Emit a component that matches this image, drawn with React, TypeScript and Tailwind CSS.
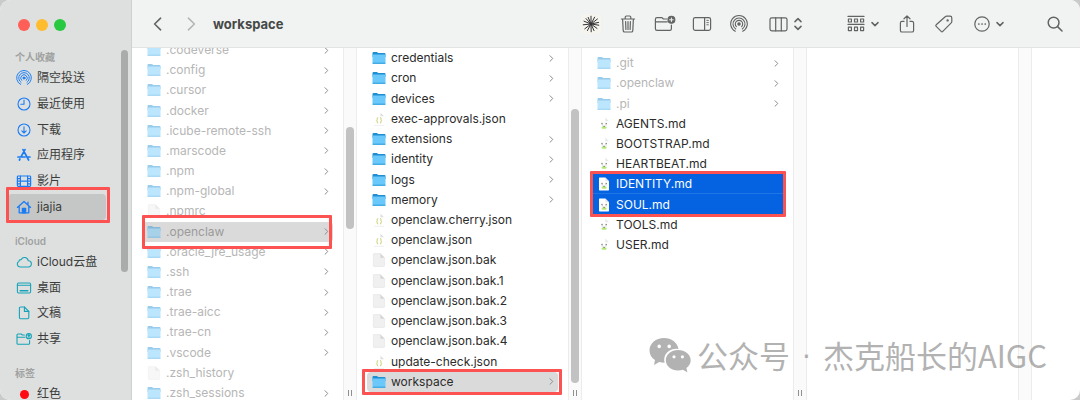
import type { ReactNode } from 'react'
import clsx from 'clsx'

type Kind = 'folder' | 'file' | 'json' | 'md'

type Entry = {
  name: string
  kind: Kind
  dim?: boolean
  state?: 'open' | 'selected'
  mark?: string
}

const homeEntries: Entry[] = [
  { name: '.codeverse', kind: 'folder', dim: true },
  { name: '.config', kind: 'folder', dim: true },
  { name: '.cursor', kind: 'folder', dim: true },
  { name: '.docker', kind: 'folder', dim: true },
  { name: '.icube-remote-ssh', kind: 'folder', dim: true },
  { name: '.marscode', kind: 'folder', dim: true },
  { name: '.npm', kind: 'folder', dim: true },
  { name: '.npm-global', kind: 'folder', dim: true },
  { name: '.npmrc', kind: 'file', dim: true },
  {
    name: '.openclaw',
    kind: 'folder',
    dim: true,
    state: 'open',
    mark: '-top-[7px] -bottom-[7px] left-0 right-[1px]',
  },
  { name: '.oracle_jre_usage', kind: 'folder', dim: true },
  { name: '.ssh', kind: 'folder', dim: true },
  { name: '.trae', kind: 'folder', dim: true },
  { name: '.trae-aicc', kind: 'folder', dim: true },
  { name: '.trae-cn', kind: 'folder', dim: true },
  { name: '.vscode', kind: 'folder', dim: true },
  { name: '.zsh_history', kind: 'file', dim: true },
  { name: '.zsh_sessions', kind: 'folder', dim: true },
]

const openclawEntries: Entry[] = [
  { name: 'credentials', kind: 'folder' },
  { name: 'cron', kind: 'folder' },
  { name: 'devices', kind: 'folder' },
  { name: 'exec-approvals.json', kind: 'json' },
  { name: 'extensions', kind: 'folder' },
  { name: 'identity', kind: 'folder' },
  { name: 'logs', kind: 'folder' },
  { name: 'memory', kind: 'folder' },
  { name: 'openclaw.cherry.json', kind: 'json' },
  { name: 'openclaw.json', kind: 'json' },
  { name: 'openclaw.json.bak', kind: 'file' },
  { name: 'openclaw.json.bak.1', kind: 'file' },
  { name: 'openclaw.json.bak.2', kind: 'file' },
  { name: 'openclaw.json.bak.3', kind: 'file' },
  { name: 'openclaw.json.bak.4', kind: 'file' },
  { name: 'update-check.json', kind: 'json' },
  {
    name: 'workspace',
    kind: 'folder',
    state: 'open',
    mark: '-top-[3px] -bottom-[3px] -left-[5px] -right-[4px]',
  },
]

const workspaceEntries: Entry[] = [
  { name: '.git', kind: 'folder', dim: true },
  { name: '.openclaw', kind: 'folder', dim: true },
  { name: '.pi', kind: 'folder', dim: true },
  { name: 'AGENTS.md', kind: 'md' },
  { name: 'BOOTSTRAP.md', kind: 'md' },
  { name: 'HEARTBEAT.md', kind: 'md' },
  {
    name: 'IDENTITY.md',
    kind: 'md',
    state: 'selected',
    mark: '-top-[3px] -bottom-[23px] -left-[2px] -right-[3px]',
  },
  { name: 'SOUL.md', kind: 'md', state: 'selected' },
  { name: 'TOOLS.md', kind: 'md' },
  { name: 'USER.md', kind: 'md' },
]

function Stroke({
  size,
  box,
  width = 1.3,
  children,
}: {
  size: string
  box: string
  width?: number
  children: ReactNode
}) {
  return (
    <svg
      viewBox={box}
      className={clsx('shrink-0', size)}
      fill="none"
      stroke="currentColor"
      strokeWidth={width}
      strokeLinecap="round"
      strokeLinejoin="round"
      aria-hidden="true"
    >
      {children}
    </svg>
  )
}

function AirdropArcs() {
  return (
    <>
      <path d="M5.3 16.3A8.3 8.3 0 1 1 12.7 16.3" />
      <path d="M5.7 14A6 6 0 1 1 12.3 14" />
      <path d="M6.4 11.7A3.7 3.7 0 1 1 11.6 11.7" />
      <circle cx="9" cy="9" r="1.2" fill="currentColor" />
    </>
  )
}

function Mark({ place }: { place: string }) {
  return (
    <span
      className={clsx(
        'pointer-events-none absolute z-10 rounded-[1px] border-[3px] border-[#fc5252]',
        place,
      )}
    />
  )
}

function EntryIcon({ kind, dim }: { kind: Kind; dim?: boolean }) {
  if (kind === 'folder') {
    return (
      <svg
        viewBox="0 0 14 14"
        className={clsx('h-3.5 w-3.5 shrink-0', dim && 'opacity-45')}
        aria-hidden="true"
      >
        <path
          d="M.5 2Q.5 1 1.5 1H4.6Q5.2 1 5.7 1.5L6.2 2H12.6Q13.5 2 13.5 3V6H.5Z"
          fill="#1f8fd3"
        />
        <rect x=".5" y="3.6" width="13" height="9.4" rx=".9" fill="#6bc8fb" />
        <rect x=".5" y="11.6" width="13" height="1.4" rx=".7" fill="#45ade6" />
      </svg>
    )
  }

  if (kind === 'json') {
    return (
      <svg viewBox="0 0 14 14" className="h-3.5 w-3.5 shrink-0" aria-hidden="true">
        <path d="M8.5.8L12 4.3H8.5Z" fill="#dedede" />
        <path d="M2 13.4H12" stroke="#ececec" strokeWidth=".8" />
        <path
          d="M6.2 5.5Q5.2 5.5 5.2 6.5V7.5L4.6 8.2L5.2 8.9V10Q5.2 11 6.2 11M8 5.5Q9 5.5 9 6.5V7.5L9.6 8.2L9 8.9V10Q9 11 8 11"
          fill="none"
          stroke="#c3c65c"
          strokeWidth=".9"
        />
      </svg>
    )
  }

  if (kind === 'md') {
    return (
      <svg viewBox="0 0 14 14" className="h-3.5 w-3.5 shrink-0" aria-hidden="true">
        <path d="M2 1.2Q2 .5 2.7.5H8.3L12 4.2V12.8Q12 13.5 11.3 13.5H2.7Q2 13.5 2 12.8Z" fill="#fff" />
        <path d="M8.3.5L12 4.2H8.3Z" fill="#e8e8e8" />
        <rect x="4.6" y="9.4" width="5" height="2.4" rx="1" fill="#b4e878" />
        <path
          d="M4.4 6.4H5.6M8.6 6.4H9.8M5.2 7.6V8.2M9 7.6V8.2M6.4 9.2Q7.1 9.8 7.8 9.2"
          fill="none"
          stroke="#4a504a"
          strokeWidth=".9"
        />
      </svg>
    )
  }

  return (
    <svg
      viewBox="0 0 14 14"
      className={clsx('h-3.5 w-3.5 shrink-0', dim && 'opacity-50')}
      aria-hidden="true"
    >
      <path
        d="M1.4 1.2Q1.4.6 2 .6H8.4L12.6 4.8V12.8Q12.6 13.4 12 13.4H2Q1.4 13.4 1.4 12.8Z"
        fill="#f0f0f0"
        stroke="#e2e2e2"
        strokeWidth=".6"
      />
      <path d="M8.4.6V4.8H12.6Z" fill="#d6d6d6" />
    </svg>
  )
}

function EntryRow({ entry }: { entry: Entry }) {
  const selected = entry.state === 'selected'

  return (
    <li className="relative flex min-h-0 flex-1">
      <button
        type="button"
        className={clsx(
          'flex min-w-0 flex-1 items-center gap-[5px] pr-[3px] pl-[5px] text-left text-xs leading-4',
          entry.state === 'open' && 'rounded-sm bg-[#dadada]',
          selected && 'bg-[#0563e1]',
          selected && entry.mark && 'border-b border-[#1f74e6]',
          selected && 'text-white',
          !selected && !entry.dim && 'text-[#2b2b2b]',
          entry.dim && (entry.state ? 'text-[#9a9a9a]' : 'text-[#b6b6b6]'),
        )}
      >
        <EntryIcon kind={entry.kind} dim={entry.dim} />
        <span className="flex-1 whitespace-nowrap">{entry.name}</span>
        {entry.kind === 'folder' && (
          <span className="text-[#8c8c8c]">
            <Stroke size="h-[7px] w-[7px]" box="0 0 7 7" width={1}>
              <path d="M2 .7L4.8 3.5L2 6.3" />
            </Stroke>
          </span>
        )}
      </button>
      {entry.mark && <Mark place={entry.mark} />}
    </li>
  )
}

function Column({
  entries = [],
  listClass,
  thumbClass,
  handle = true,
}: {
  entries?: Entry[]
  listClass?: string
  thumbClass?: string
  handle?: boolean
}) {
  return (
    <div className="flex w-[225px] shrink-0">
      <ul className={clsx('mx-[10px] flex flex-1 flex-col', listClass)}>
        {entries.map((entry) => (
          <EntryRow key={entry.name} entry={entry} />
        ))}
      </ul>
      <div className="flex w-3.5 flex-col items-center border-x border-[#ececec] bg-[#fafafa]">
        {thumbClass && (
          <div className={clsx('w-2 rounded-full bg-[#c2c2c2]', thumbClass)} />
        )}
        {handle && (
          <div className="mt-auto mb-1 h-[6px] w-1 border-x border-[#8f8f8f]" />
        )}
      </div>
    </div>
  )
}

function SidebarSection({
  title,
  listClass,
  iconClass,
  children,
}: {
  title: string
  listClass: string
  iconClass?: string
  children: ReactNode
}) {
  return (
    <section>
      <h2 className="pl-[15px] text-[10px] leading-4 font-semibold text-[#a0a2a1]">
        {title}
      </h2>
      <ul className={clsx('flex flex-col', listClass, iconClass)}>{children}</ul>
    </section>
  )
}

function SidebarItem({
  label,
  icon,
  active,
}: {
  label: string
  icon: ReactNode
  active?: boolean
}) {
  return (
    <li className="relative flex flex-1">
      <a
        href="#"
        className={clsx(
          'mr-[25px] ml-2 flex flex-1 items-center gap-[5px] rounded-[4px] pl-2 text-xs leading-4',
          active && 'bg-[#c5c7c6]',
        )}
      >
        {icon}
        <span className="whitespace-nowrap text-[#3b3d3c]">{label}</span>
      </a>
      {active && (
        <Mark place="-top-[7px] -bottom-[3px] left-[6px] right-[21px]" />
      )}
    </li>
  )
}

function Sidebar() {
  return (
    <aside className="flex w-[132px] shrink-0 flex-col border-r border-[#cfd1d0] bg-[#dee0df]">
      <div className="flex h-[49px] shrink-0 items-center gap-[6px] pl-[18px]">
        <button type="button" aria-label="Close" className="h-3 w-3 rounded-full bg-[#ff5f57]" />
        <button type="button" aria-label="Minimize" className="h-3 w-3 rounded-full bg-[#febc2e]" />
        <button type="button" aria-label="Zoom" className="h-3 w-3 rounded-full bg-[#28c840]" />
      </div>

      <div className="flex min-h-0 flex-1">
        <nav className="flex flex-1 flex-col gap-[13px]">
          <SidebarSection
            title="个人收藏"
            listClass="h-[155px]"
            iconClass="text-[#1a7cf5]"
          >
            <SidebarItem
              label="隔空投送"
              icon={
                <Stroke size="h-4 w-4" box="0 0 18 18" width={1.1}>
                  <AirdropArcs />
                </Stroke>
              }
            />
            <SidebarItem
              label="最近使用"
              icon={
                <Stroke size="h-4 w-4" box="0 0 16 16" width={1.1}>
                  <circle cx="8" cy="8" r="6" />
                  <path d="M8 4V8.3H4.8" />
                </Stroke>
              }
            />
            <SidebarItem
              label="下载"
              icon={
                <Stroke size="h-4 w-4" box="0 0 16 16" width={1.1}>
                  <circle cx="8" cy="8" r="6" />
                  <path d="M8 4.8V10.8M5.8 8.8L8 11L10.2 8.8" />
                </Stroke>
              }
            />
            <SidebarItem
              label="应用程序"
              icon={
                <Stroke size="h-4 w-4" box="0 0 16 16" width={1.7}>
                  <path d="M7 2.6L12.6 13M9 2.6L5.1 9.6M3.9 12L3.4 13M2 10H9M12.2 10H14" />
                </Stroke>
              }
            />
            <SidebarItem
              label="影片"
              icon={
                <Stroke size="h-4 w-4" box="0 0 16 16" width={1.2}>
                  <rect x="1.4" y="3" width="13.2" height="10.4" rx=".8" />
                  <path d="M4.4 3V13.4M11.6 3V13.4M4.4 8.2H11.6M1.4 5.6H4.4M1.4 8.2H4.4M1.4 10.8H4.4M11.6 5.6H14.6M11.6 8.2H14.6M11.6 10.8H14.6" />
                </Stroke>
              }
            />
            <SidebarItem
              active
              label="jiajia"
              icon={
                <Stroke size="h-4 w-4" box="0 0 16 16" width={1.3}>
                  <path d="M1.4 8.4L8 2.4L14.6 8.4M3.2 7V13.8H12.8V7M12 5.6V3.2" />
                  <path d="M6.4 13.8V9.4H9.6V13.8Z" fill="currentColor" />
                </Stroke>
              }
            />
          </SidebarSection>

          <SidebarSection
            title="iCloud"
            listClass="h-[103px]"
            iconClass="text-[#16a3b8]"
          >
            <SidebarItem
              label="iCloud云盘"
              icon={
                <Stroke size="h-4 w-4" box="0 0 16 16" width={1.1}>
                  <path d="M4 13A3 3 0 0 1 2.8 7.4A2.3 2.3 0 0 1 5.2 5.6A3.7 3.7 0 0 1 12.2 6.8A3.1 3.1 0 0 1 12.4 13Z" />
                </Stroke>
              }
            />
            <SidebarItem
              label="桌面"
              icon={
                <Stroke size="h-4 w-4" box="0 0 16 16" width={1.1}>
                  <rect x="1.4" y="3" width="13.2" height="10" rx="1.2" />
                  <path d="M1.4 5.2H14.6" />
                  <path d="M4.2 10.8H11.8" strokeWidth="1.5" />
                </Stroke>
              }
            />
            <SidebarItem
              label="文稿"
              icon={
                <Stroke size="h-4 w-4" box="0 0 16 16" width={1.1}>
                  <path d="M3.4 3.2Q3.4 2 4.6 2H8.4L12.8 6.4V12.6Q12.8 13.8 11.6 13.8H4.6Q3.4 13.8 3.4 12.6Z" />
                  <path d="M8.4 2V6.4H12.8" />
                </Stroke>
              }
            />
            <SidebarItem
              label="共享"
              icon={
                <Stroke size="h-4 w-4" box="0 0 16 16" width={1.1}>
                  <path d="M8.4 4H6.4L5.2 3H2Q1 3 1 4V12.2Q1 13.2 2 13.2H12.6Q13.6 13.2 13.6 12.2V9.6M1 6.2H8.8" />
                  <circle cx="12.8" cy="5.2" r="2.6" />
                  <circle cx="12.8" cy="4.6" r=".8" fill="currentColor" />
                  <path d="M11.6 7H14" />
                </Stroke>
              }
            />
          </SidebarSection>

          <SidebarSection title="标签" listClass="h-[26px]">
            <SidebarItem
              label="红色"
              icon={
                <span className="flex w-4 justify-center">
                  <span className="h-[9px] w-[9px] rounded-full bg-[#ff0a12]" />
                </span>
              }
            />
          </SidebarSection>
        </nav>
        <div className="-ml-[10px] flex w-[10px] justify-start">
          <div className="mt-px h-[222px] w-[7px] rounded-full bg-[#aaacab]" />
        </div>
      </div>
    </aside>
  )
}

function ToolButton({ label, children }: { label: string; children: ReactNode }) {
  return (
    <button
      type="button"
      aria-label={label}
      className="flex h-6 w-[37px] items-center justify-center"
    >
      {children}
    </button>
  )
}

function ChevronDown() {
  return (
    <Stroke size="h-2 w-2" box="0 0 8 8" width={1.5}>
      <path d="M1 2.6L4 5.6L7 2.6" />
    </Stroke>
  )
}

function Toolbar() {
  return (
    <header className="flex h-12 shrink-0 items-center border-b border-[#e2e4e3] bg-[#f1f3f2] pr-[17px] text-[#626463]">
      <div className="ml-[20px] flex items-center gap-[21px]">
        <button type="button" aria-label="Back">
          <Stroke size="h-3.5 w-3" box="0 0 12 14" width={1.6}>
            <path d="M8.6 1.2L2.6 7L8.6 12.8" />
          </Stroke>
        </button>
        <button type="button" aria-label="Forward" className="text-[#b4b6b5]">
          <Stroke size="h-3.5 w-3" box="0 0 12 14" width={1.6}>
            <path d="M3.4 1.2L9.4 7L3.4 12.8" />
          </Stroke>
        </button>
      </div>
      <h1 className="ml-[16px] text-[13px] leading-5 font-bold text-[#464847]">
        workspace
      </h1>

      <div className="ml-auto flex items-center">
        <ToolButton label="Open in Claude">
          <span className="rounded-[4px] bg-[#f6f4ee] p-px text-[#333]">
            <Stroke size="h-[18px] w-[18px]" box="0 0 18 18" width={1}>
              <path d="M9 9V1.2M9 9L12.600 2.200M9 9L15.400 4M9 9L16.600 7.400M9 9L16.800 10.200M9 9L15 13.400M9 9L12 15.600M9 9L9.200 16.800M9 9L5.400 15.600M9 9L2.800 13.800M9 9L1.200 9.800M9 9L2 6.200M9 9L4 3.600M9 9L6.200 2.400" />
            </Stroke>
          </span>
        </ToolButton>
        <ToolButton label="Delete">
          <Stroke size="h-[18px] w-[18px]" box="0 0 18 18" width={1.2}>
            <path d="M2.400 4H15.600M6.2 4V2.2Q6.2 1 7.4 1H10.6Q11.8 1 11.8 2.2V4M3.6 4L4.2 15.6Q4.3 17 5.6 17H12.4Q13.7 17 13.8 15.6L14.4 4M6.6 6.6L6.9 14.4M9 6.6V14.4M11.4 6.6L11.1 14.4" />
          </Stroke>
        </ToolButton>
        <ToolButton label="New folder">
          <Stroke size="h-[18px] w-[22px]" box="0 0 22 18" width={1.2}>
            <path d="M12.6 4H9.4L8 2.6H3Q1.4 2.6 1.4 4.2V13.8Q1.4 15.4 3 15.4H15.8Q17.4 15.4 17.4 13.8V10M1.4 6.8H13.2" />
            <circle cx="17.4" cy="4.8" r="3.4" fill="currentColor" />
            <path d="M17.4 3V6.600M15.6 4.8H19.200" stroke="#f1f3f2" strokeWidth="1" />
          </Stroke>
        </ToolButton>
        <ToolButton label="Toggle preview">
          <Stroke size="h-[18px] w-[20px]" box="0 0 20 18" width={1.2}>
            <rect x="1.4" y="2.6" width="17.2" height="12.8" rx="1.8" />
            <path d="M12.6 2.6V15.4" />
            <path d="M14.8 5.4H16.4M14.8 7.6H16.4M14.8 9.8H16.4" strokeWidth=".9" />
          </Stroke>
        </ToolButton>
        <ToolButton label="AirDrop">
          <Stroke size="h-[18px] w-[18px]" box="0 0 18 18" width={1.1}>
            <AirdropArcs />
          </Stroke>
        </ToolButton>

        <button
          type="button"
          aria-label="View as columns"
          className="ml-3 flex items-center gap-[6px]"
        >
          <Stroke size="h-[18px] w-[19px]" box="0 0 19 18" width={1.2}>
            <rect x="1" y="2.8" width="17" height="13" rx="1.8" />
            <path d="M6.7 2.8V15.8M12.3 2.8V15.8" />
          </Stroke>
          <Stroke size="h-3.5 w-2" box="0 0 8 14" width={1.5}>
            <path d="M1 4.6L4 1.6L7 4.6M1 9.4L4 12.4L7 9.4" />
          </Stroke>
        </button>

        <button
          type="button"
          aria-label="Group items"
          className="ml-[45px] flex items-center gap-[6px]"
        >
          <Stroke size="h-[18px] w-[18px]" box="0 0 18 18" width={1.2}>
            <path d="M1 1.4H17M1 9.4H17" />
            <path d="M1.4 4H4.4V7H1.4ZM7.5 4H10.5V7H7.5ZM13.6 4H16.6V7H13.6ZM1.4 12.2H4.4V15.6H1.4ZM7.5 12.2H10.5V15.6H7.5ZM13.6 12.2H16.6V15.6H13.6Z" />
          </Stroke>
          <ChevronDown />
        </button>

        <div className="ml-[9px] flex">
          <ToolButton label="Share">
            <Stroke size="h-[18px] w-[18px]" box="0 0 18 18" width={1.2}>
              <path d="M6 6.4H4Q2.4 6.4 2.4 8V15.4Q2.4 17 4 17H14Q15.6 17 15.6 15.4V8Q15.6 6.4 14 6.4H12M9 11.4V1M6 3.8L9 .9L12 3.8" />
            </Stroke>
          </ToolButton>
          <ToolButton label="Edit tags">
            <Stroke size="h-[18px] w-[18px]" box="0 0 18 18" width={1.2}>
              <path d="M10.2 1.8Q10.8 1.2 11.6 1.2H15Q16.8 1.2 16.8 3V6.4Q16.8 7.2 16.2 7.8L7.8 16.4Q7 17.2 6.2 16.4L1.2 11.4Q.4 10.6 1.2 9.8Z" />
              <circle cx="12.6" cy="5.4" r=".6" />
            </Stroke>
          </ToolButton>
        </div>

        <button
          type="button"
          aria-label="More actions"
          className="ml-3 flex items-center gap-[6px]"
        >
          <Stroke size="h-4 w-4" box="0 0 16 16" width={1.2}>
            <circle cx="8" cy="8" r="7.2" />
            <path d="M4.8 8H4.9M8 8H8.1M11.2 8H11.3" strokeWidth="1.7" />
          </Stroke>
          <ChevronDown />
        </button>

        <button type="button" aria-label="Search" className="ml-[43px]">
          <Stroke size="h-4 w-4" box="0 0 16 16" width={1.5}>
            <circle cx="6.6" cy="6.6" r="5.4" />
            <path d="M10.6 10.6L15 15" />
          </Stroke>
        </button>
      </div>
    </header>
  )
}

function Watermark() {
  return (
    <div className="pointer-events-none absolute right-[33px] bottom-[27px] flex items-center gap-[6px] text-[#7f7f7f] opacity-60">
      <svg viewBox="0 0 42 36" className="h-9 w-[42px]" fill="currentColor" aria-hidden="true">
        <path
          fillRule="evenodd"
          d="M15 1C7 1 .5 6.400 .5 13.400C.5 17.400 2.600 20.700 6 23L5 28L10.200 25Q12.600 25.800 15.600 25.800A12 11 0 0 1 29.500 12C28.400 5.600 22.400 1 15 1ZM10.200 7.600A1.800 1.800 0 1 1 10.200 11.200A1.800 1.800 0 1 1 10.200 7.600ZM20.200 7.600A1.800 1.800 0 1 1 20.200 11.200A1.800 1.800 0 1 1 20.200 7.600Z"
        />
        <path
          fillRule="evenodd"
          d="M29 13C22.200 13 16.800 17.600 16.800 23.300S22.200 33.600 29 33.600Q31.600 33.600 33.800 32.800L38.400 35.200L37.400 31C40 29.200 41.700 26.400 41.700 23.300C41.700 17.600 36 13 29 13ZM25 18.200A1.600 1.600 0 1 1 25 21.400A1.600 1.600 0 1 1 25 18.200ZM33.400 18.200A1.600 1.600 0 1 1 33.400 21.400A1.600 1.600 0 1 1 33.400 18.200Z"
        />
      </svg>
      <p className="flex font-['Noto_Sans_CJK_SC',sans-serif] text-[31px] leading-9 whitespace-nowrap">
        <span>公众号</span>
        <span className="w-[33px] text-center font-['Liberation_Sans',sans-serif]">
          ·
        </span>
        <span>杰克船长的AIGC</span>
      </p>
    </div>
  )
}

function App() {
  return (
    <div className="h-screen bg-[#c9cbca] font-['Inter','Noto_Sans_CJK_SC',sans-serif] antialiased">
      <div className="relative flex h-full overflow-hidden rounded-[10px] bg-white">
        <Sidebar />
        <main className="flex min-w-0 flex-1 flex-col">
          <Toolbar />
          <div className="flex min-h-0 flex-1 overflow-hidden">
            <Column
              entries={homeEntries}
              listClass="-mt-2 h-[363px]"
              thumbClass="mt-[79px] h-[102px]"
            />
            <Column
              entries={openclawEntries}
              listClass="h-[344px]"
              thumbClass="mt-[61px] h-[274px]"
            />
            <Column entries={workspaceEntries} listClass="mt-[5px] h-[202px]" />
            <Column handle={false} />
          </div>
        </main>
        <Watermark />
      </div>
    </div>
  )
}

export default App
